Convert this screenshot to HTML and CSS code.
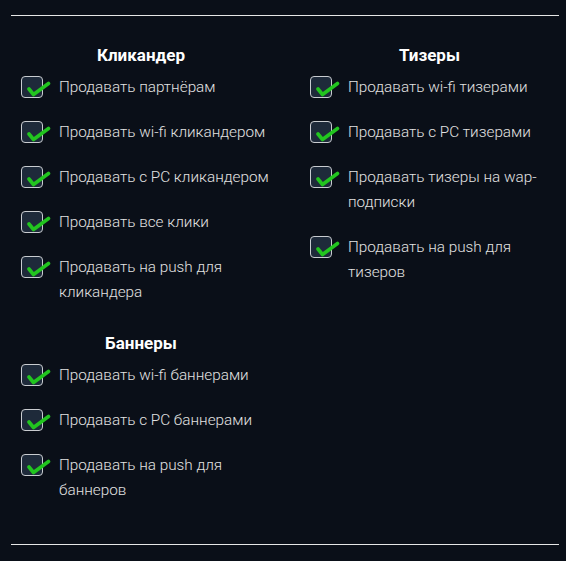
FILE: index.html
```html
<!DOCTYPE html>
<html lang="ru">
<head>
  <meta charset="UTF-8">
  <meta name="viewport" content="width=device-width, initial-scale=1.0">
  <title>Настройки продаж</title>
  <link rel="stylesheet" href="styles.css">
</head>
<body>

  <div class="panel">
    <div class="col">
      <div class="group">
        <h3>Кликандер</h3>
        <label class="item"><span class="box"></span><span class="text">Продавать партнёрам</span></label>
        <label class="item"><span class="box"></span><span class="text">Продавать wi-fi кликандером</span></label>
        <label class="item"><span class="box"></span><span class="text">Продавать с PC кликандером</span></label>
        <label class="item"><span class="box"></span><span class="text">Продавать все клики</span></label>
        <label class="item"><span class="box"></span><span class="text">Продавать на push для кликандера</span></label>
      </div>
      <div class="group">
        <h3>Баннеры</h3>
        <label class="item"><span class="box"></span><span class="text">Продавать wi-fi баннерами</span></label>
        <label class="item"><span class="box"></span><span class="text">Продавать с PC баннерами</span></label>
        <label class="item"><span class="box"></span><span class="text">Продавать на push для баннеров</span></label>
      </div>
    </div>
    <div class="col">
      <div class="group">
        <h3>Тизеры</h3>
        <label class="item"><span class="box"></span><span class="text">Продавать wi-fi тизерами</span></label>
        <label class="item"><span class="box"></span><span class="text">Продавать с PC тизерами</span></label>
        <label class="item"><span class="box"></span><span class="text">Продавать тизеры на wap-подписки</span></label>
        <label class="item"><span class="box"></span><span class="text">Продавать на push для тизеров</span></label>
      </div>
    </div>
  </div>

  <script>
    // checkmark svg in every box
    var tick = '<svg class="tick" width="30" height="24" viewBox="0 0 30 24"><path d="M8 13 L12.5 18.5 L27.5 7.5" fill="none" stroke="#22c51f" stroke-width="3.6" stroke-linecap="round" stroke-linejoin="round"/></svg>';
    document.querySelectorAll('.box').forEach(function (b) { b.innerHTML = tick; });
  </script>

</body>
</html>
```

FILE: styles.css
```css
body {
  margin: 0;
  padding: 15px 7px 0 11px;
  background: #0a0f18;
  font-family: Roboto, "Liberation Sans", sans-serif;
  color: #e2e2e2;
}
.panel {
  display: flex;
  gap: 29px;
  border-top: 1px solid #e6e6e6;
  border-bottom: 1px solid #e6e6e6;
  padding: 28px 0 41px;
  width: 548px;
}
.col { flex: 0 0 260px; }
.col + .col { flex-basis: 259px; }
.group + .group { margin-top: 27px; }
h3 {
  margin: 0 0 9px;
  font-size: 17px;
  line-height: 22px;
  font-weight: bold;
  color: #fff;
  text-align: center;
}
.item {
  display: flex;
  gap: 16px;
  margin-bottom: 20px;
  padding-left: 10px;
  font-size: 15.3px;
  font-weight: 300;
  line-height: 25px;
}
.item:last-child { margin-bottom: 0; }
.box {
  position: relative;
  flex: 0 0 22px;
  height: 22px;
  margin-top: 1px;
  box-sizing: border-box;
  border: 1px solid #c9ccd0;
  border-radius: 4px;
  background: #1e2a3a;
}
.tick { position: absolute; left: -1px; top: -1px; }
```
